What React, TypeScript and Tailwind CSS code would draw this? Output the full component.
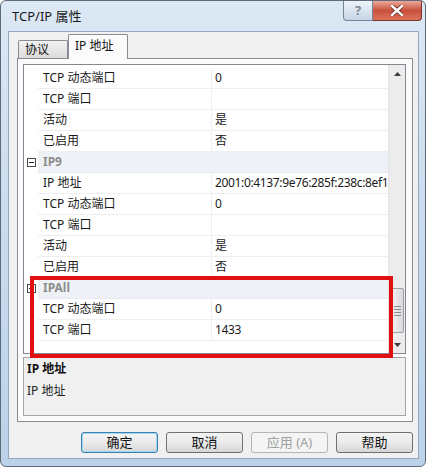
import React from "react";

const FONT = "font-['Noto_Sans','Noto_Sans_CJK_SC',sans-serif]";

type Row = { k?: string; v?: string; cat?: string };

const rows: Row[] = [
  { k: "TCP 动态端口", v: "0" },
  { k: "TCP 端口", v: "" },
  { k: "活动", v: "是" },
  { k: "已启用", v: "否" },
  { cat: "IP9" },
  { k: "IP 地址", v: "2001:0:4137:9e76:285f:238c:8ef1" },
  { k: "TCP 动态端口", v: "0" },
  { k: "TCP 端口", v: "" },
  { k: "活动", v: "是" },
  { k: "已启用", v: "否" },
  { cat: "IPAll" },
  { k: "TCP 动态端口", v: "0" },
  { k: "TCP 端口", v: "1433" },
];

function MinusBox() {
  return (
    <div className="w-[9px] h-[9px] border border-[#4a4a4a] bg-white flex items-center justify-center">
      <div className="w-[5px] h-[1px] bg-[#222]" />
    </div>
  );
}

function GridRow({ row }: { row: Row }) {
  if (row.cat) {
    return (
      <div className="flex h-[21px]">
        <div className="w-[14px] flex items-center pl-[3px]">
          <MinusBox />
        </div>
        <div className="flex-1 bg-[#eef2f7] flex items-center pl-[5px] border-b border-[#e6eaf0]">
          <span className="text-[12px] font-bold text-[#8c8c8c]">{row.cat}</span>
        </div>
      </div>
    );
  }
  return (
    <div className="flex h-[21px]">
      <div className="w-[14px]" />
      <div className="w-[174px] flex items-center pl-[5px] border-b border-[#efefef] border-r border-r-[#eeeeee] whitespace-nowrap">
        <span className="text-[12px] text-[#1a1a1a]">{row.k}</span>
      </div>
      <div className="flex-1 flex items-center pl-[3px] border-b border-[#efefef] overflow-hidden whitespace-nowrap">
        <span className="text-[12px] text-[#1a1a1a] tracking-[-0.35px]">{row.v}</span>
      </div>
    </div>
  );
}

function Scrollbar() {
  return (
    <div className="w-[17px] bg-[#ececec] border-l border-[#e2e2e2] flex flex-col">
      <div className="h-[17px] flex items-center justify-center">
        <svg width="7" height="4" viewBox="0 0 7 4">
          <path d="M0 4 L3.5 0 L7 4 Z" fill="#3a3a3a" />
        </svg>
      </div>
      <div className="flex-1 flex flex-col px-[1px]">
        <div className="flex-1" />
        <div className="h-[45px] rounded-[2px] border border-[#9aa0a8] bg-gradient-to-r from-[#f4f4f4] to-[#d9d9d9] flex flex-col items-center justify-center gap-[2px]">
          <div className="w-[7px] h-[1px] bg-[#8a8f96]" />
          <div className="w-[7px] h-[1px] bg-[#8a8f96]" />
          <div className="w-[7px] h-[1px] bg-[#8a8f96]" />
          <div className="w-[7px] h-[1px] bg-[#8a8f96]" />
        </div>
        <div className="h-[3px]" />
      </div>
      <div className="h-[17px] flex items-center justify-center">
        <svg width="7" height="4" viewBox="0 0 7 4">
          <path d="M0 0 L3.5 4 L7 0 Z" fill="#3a3a3a" />
        </svg>
      </div>
    </div>
  );
}

function Btn({ label, primary, disabled }: { label: string; primary?: boolean; disabled?: boolean }) {
  let cls = "border-[#707070] text-[#111]";
  if (primary) cls = "border-[#3c7fb1] text-[#111] shadow-[inset_0_0_0_1px_#9fd8f0]";
  if (disabled) cls = "border-[#b5b5b5] text-[#a0a0a0]";
  return (
    <div
      className={`w-[77px] h-[21px] rounded-[3px] border flex items-center justify-center text-[13px] ${
        disabled ? "bg-[#f4f4f4]" : "bg-gradient-to-b from-[#f3f3f3] via-[#ebebeb] to-[#d6d6d6]"
      } ${cls}`}
    >
      {label}
    </div>
  );
}

export default function App() {
  return (
    <div className={`relative w-[427px] h-[468px] bg-white overflow-hidden ${FONT}`}>
      <div className="w-[426px] h-[467px] rounded-[6px] border border-[#5f6a78] bg-gradient-to-b from-[#dce8f4] via-[#c9dbee] to-[#bcd2ea] flex flex-col pl-[7px] pr-[6px] pb-[7px]">
        {/* title bar */}
        <div className="h-[30px] flex items-start">
          <span className="mt-[6px] ml-[4px] text-[13px] text-[#1b1b1b]">TCP/IP 属性</span>
          <div className="ml-auto flex -mr-[3px]">
            <div className="w-[30px] h-[20px] rounded-bl-[4px] border border-t-0 border-[#76869a] bg-gradient-to-b from-[#eef3f9] to-[#c6d5e6] flex items-center justify-center text-[13px] font-bold text-[#7d8794]">
              ?
            </div>
            <div className="w-[49px] h-[20px] rounded-br-[4px] border border-t-0 border-l-0 border-[#7a3229] bg-gradient-to-b from-[#e9a99b] via-[#c8503d] to-[#d9735c] flex items-center justify-center">
              <svg width="12" height="11" viewBox="0 0 12 11">
                <path d="M1 1 L11 10 M11 1 L1 10" stroke="#5a2018" strokeWidth="4" strokeLinecap="round" />
                <path d="M1 1 L11 10 M11 1 L1 10" stroke="#ffffff" strokeWidth="2.4" strokeLinecap="round" />
              </svg>
            </div>
          </div>
        </div>

        {/* client */}
        <div className="flex-1 bg-[#f0f0f0] border border-[#93a7bf] flex flex-col pl-[8px] pr-[5px] pb-[5px]">
          {/* tabs */}
          <div className="h-[26px] flex items-end pl-[1px]">
            <div className="w-[50px] h-[18px] border border-b-0 border-[#898c95] rounded-t-[2px] bg-gradient-to-b from-[#f2f2f2] to-[#dcdcdc] flex items-center pl-[6px] text-[12px] text-[#111]">
              协议
            </div>
            <div className="w-[60px] h-[25px] -mb-[1px] border border-b-0 border-[#898c95] rounded-t-[2px] bg-[#fbfbfb] flex items-center pl-[6px] pb-[3px] text-[12px] text-[#111] relative z-10">
              IP 地址
            </div>
          </div>

          {/* tab panel */}
          <div className="h-[364px] border border-[#898c95] bg-[#fbfbfb] flex flex-col pt-[5px] pl-[5px] pr-[6px] pb-[5px] gap-[3px]">
            <div className="h-[290px] border border-[#828790] bg-white flex">
              <div className="flex-1 pt-[3px] overflow-hidden">
                {rows.map((r, i) => (
                  <GridRow key={i} row={r} />
                ))}
              </div>
              <Scrollbar />
            </div>
            <div className="flex-1 border border-[#a5a5a5] bg-[#f0f0f0] flex flex-col pl-[3px] pt-[3px] gap-[6px]">
              <div className="text-[12px] font-bold text-[#111] leading-[16px]">IP 地址</div>
              <div className="text-[12px] text-[#222] leading-[16px]">IP 地址</div>
            </div>
          </div>

          {/* buttons */}
          <div className="mt-auto flex justify-end gap-[8px]">
            <Btn label="确定" primary />
            <Btn label="取消" />
            <Btn label="应用 (A)" disabled />
            <Btn label="帮助" />
          </div>
        </div>
      </div>

      {/* red highlight */}
      <div className="absolute left-[30px] top-[276px] w-[363px] h-[82px] border-[4px] border-[#e00f10]" />
    </div>
  );
}
